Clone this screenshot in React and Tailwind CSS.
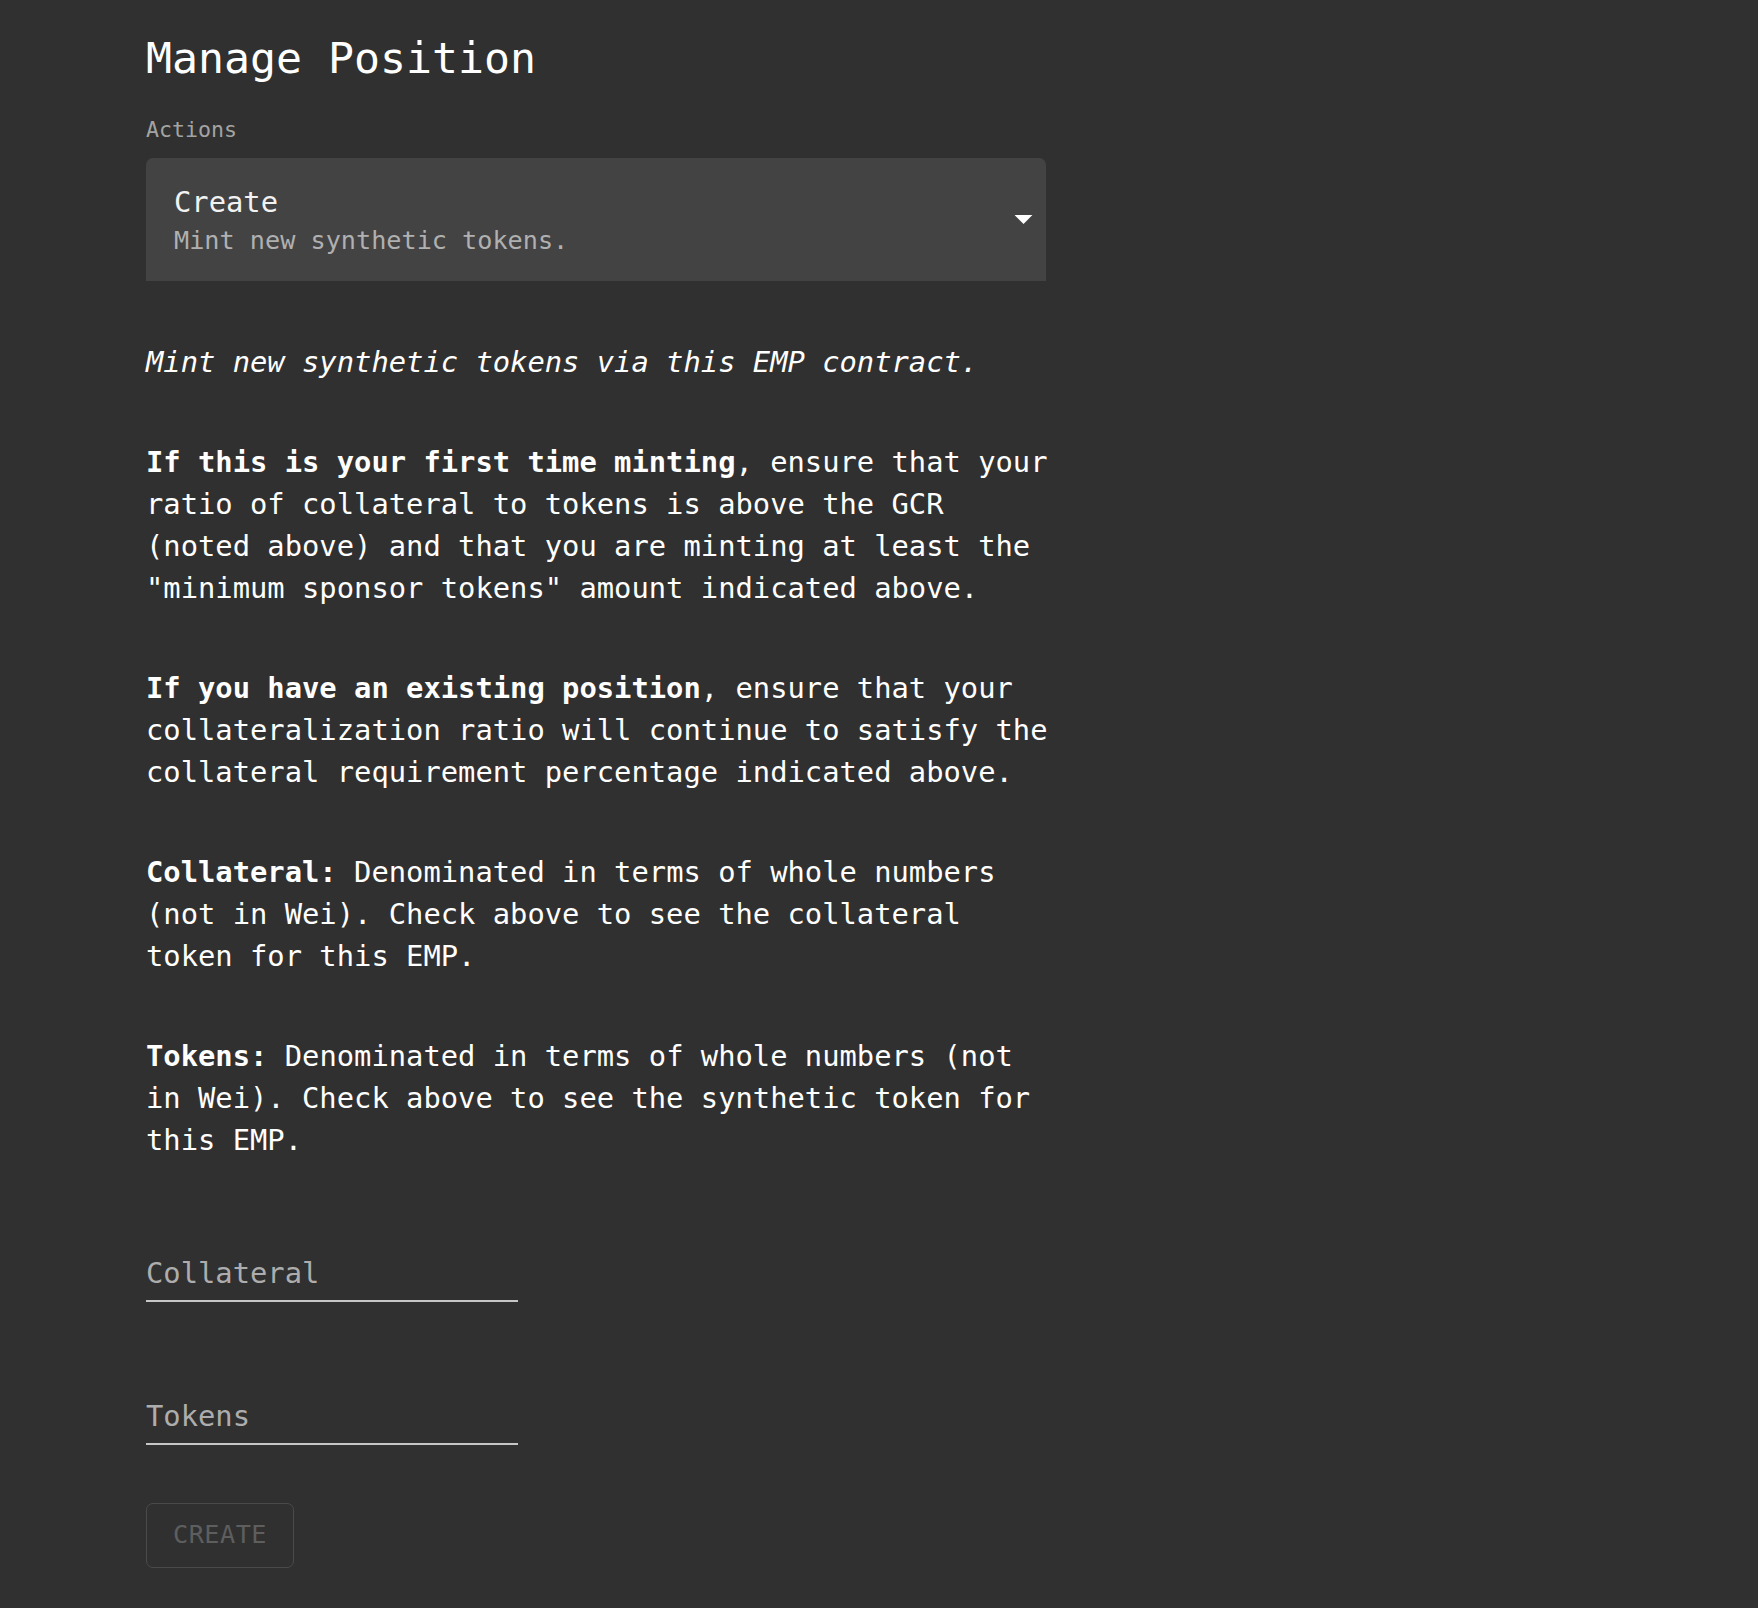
const mono = { fontFamily: '"DejaVu Sans Mono", "Liberation Mono", monospace' };

const Paragraph = ({ children, italic }) => (
  <p className={`text-[28.8px] leading-[42px] text-white ${italic ? "italic" : ""}`}>{children}</p>
);

const UnderlineInput = ({ placeholder }) => (
  <div className="w-[372px] border-b-2 border-[#c6c6c6] pb-[9px]">
    <div className="text-[28.8px] leading-[36px] text-[#adadad]">{placeholder}</div>
  </div>
);

export default function App() {
  return (
    <div className="min-h-screen bg-[#303030]" style={mono}>
      <div className="pl-[146px] pt-[30px] pb-[38px]">
        <h1 className="text-[43.2px] leading-[57.6px] text-white">Manage Position</h1>

        <div className="mt-[30px] text-[21.6px] leading-[24px] text-[#a3a3a3]">Actions</div>

        <div className="relative mt-[16px] w-[900px] h-[123px] bg-[#434343] rounded-t-[7px] pl-[28px] pt-[27px]">
          <div className="text-[28.8px] leading-[34px] text-[#f2f2f2]">Create</div>
          <div className="mt-[7px] text-[25.2px] leading-[30px] text-[#b0b0b0]">Mint new synthetic tokens.</div>
          <svg className="absolute right-[1px] top-[39px] w-[43px] h-[43px]" viewBox="0 0 24 24" fill="#ffffff">
            <path d="M7 10l5 5 5-5z" />
          </svg>
        </div>

        <div className="mt-[60px] w-[910px] flex flex-col gap-[58px]">
          <Paragraph italic>Mint new synthetic tokens via this EMP contract.</Paragraph>
          <Paragraph>
            <strong className="font-bold">If this is your first time minting</strong>, ensure that your ratio of
            collateral to tokens is above the GCR (noted above) and that you are minting at least the "minimum
            sponsor tokens" amount indicated above.
          </Paragraph>
          <Paragraph>
            <strong className="font-bold">If you have an existing position</strong>, ensure that your
            collateralization ratio will continue to satisfy the collateral requirement percentage indicated above.
          </Paragraph>
          <Paragraph>
            <strong className="font-bold">Collateral:</strong> Denominated in terms of whole numbers (not in Wei).
            Check above to see the collateral token for this EMP.
          </Paragraph>
          <Paragraph>
            <strong className="font-bold">Tokens:</strong> Denominated in terms of whole numbers (not in Wei). Check
            above to see the synthetic token for this EMP.
          </Paragraph>
        </div>

        <div className="mt-[94px] flex flex-col gap-[96px]">
          <UnderlineInput placeholder="Collateral" />
          <UnderlineInput placeholder="Tokens" />
        </div>

        <button
          disabled
          className="mt-[58px] w-[148px] h-[65px] rounded-[7px] border border-[#4a4a4a] text-[25.2px] tracking-[0.5px] text-[#5e5e5e] flex items-center justify-center"
          style={mono}
        >
          CREATE
        </button>
      </div>
    </div>
  );
}
